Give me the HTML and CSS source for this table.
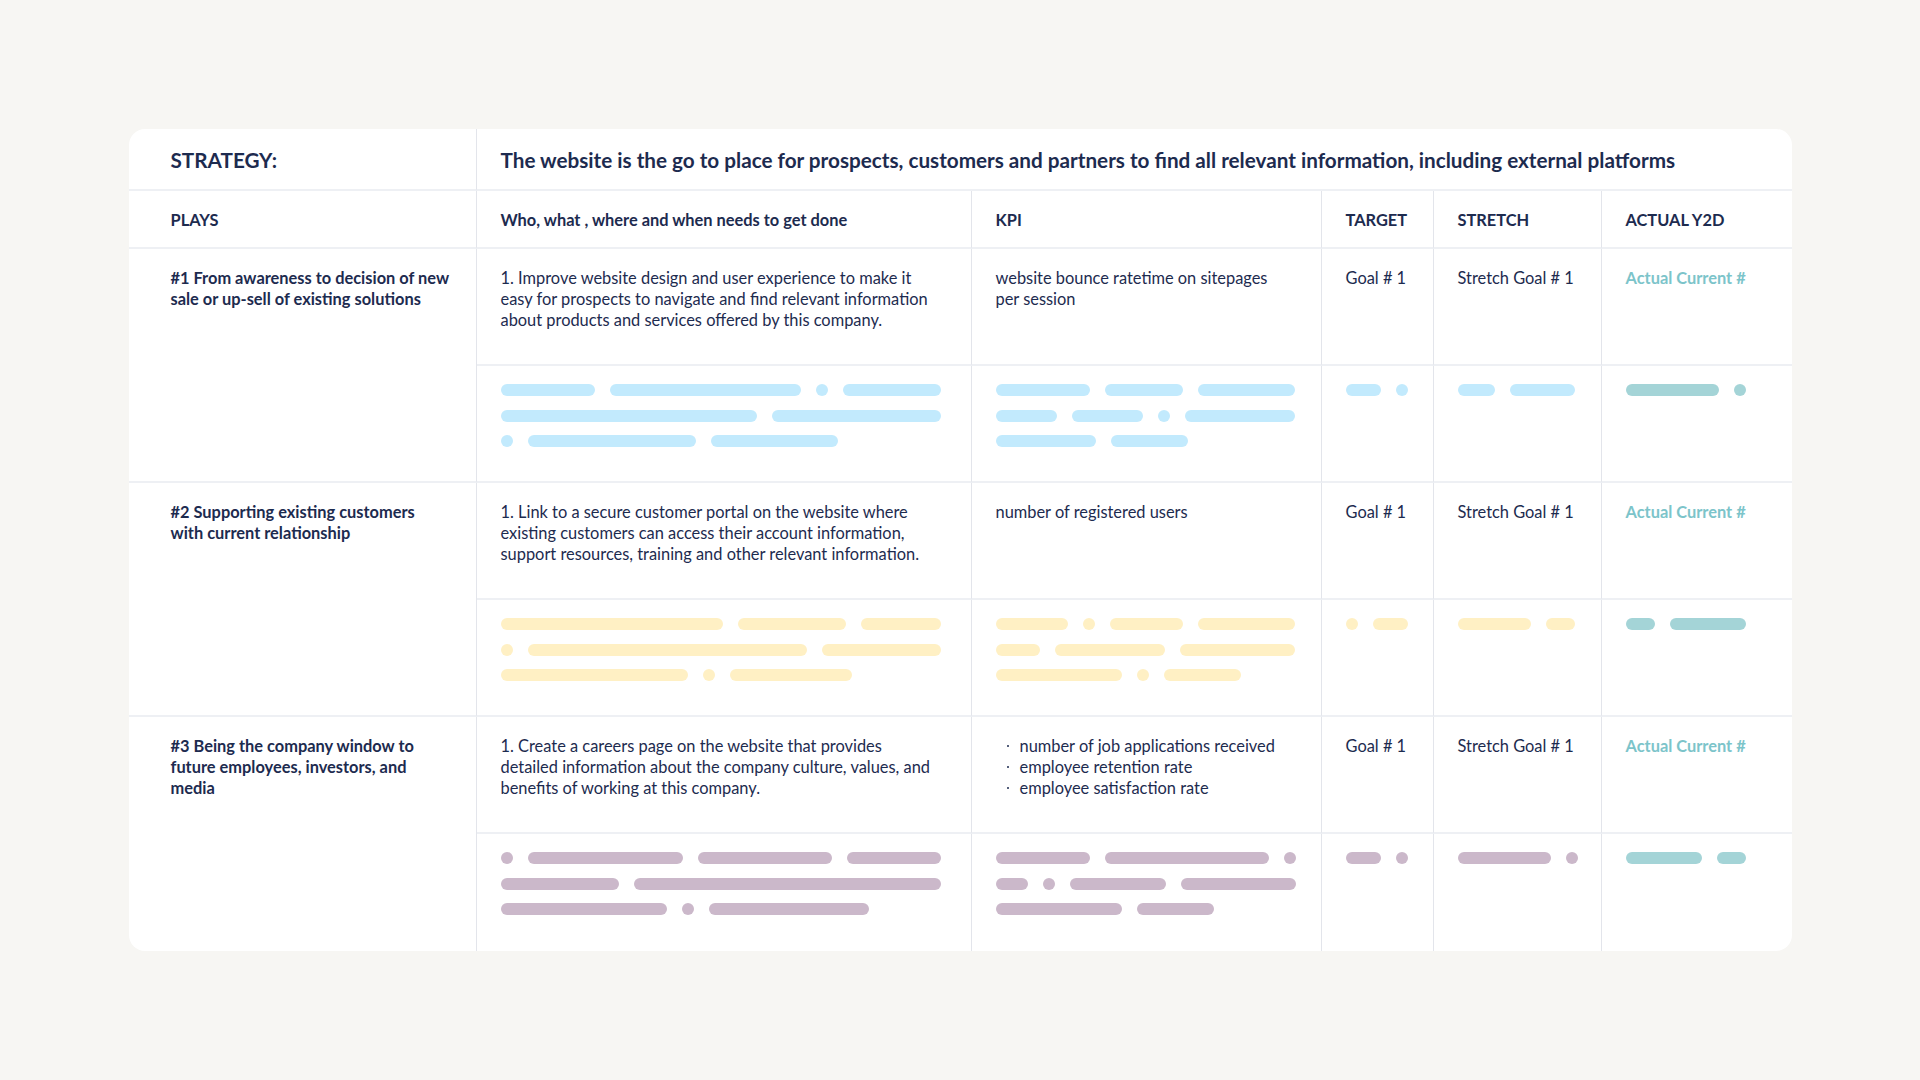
FILE: index.html
```html
<!DOCTYPE html>
<html lang="en">
<head>
<meta charset="utf-8">
<title>Strategy plays</title>
<link rel="stylesheet" href="styles.css">
</head>
<body>
<div class="page">
  <div class="sheet">
    <div class="cell c1 strat strat-label">STRATEGY:</div>
    <div class="cell strat strat-text last-col">The website is the go to place for prospects, customers and partners to find all relevant information, including external platforms</div>

    <div class="cell c1 head">PLAYS</div>
    <div class="cell head">Who, what , where and when needs to get done</div>
    <div class="cell head">KPI</div>
    <div class="cell head">TARGET</div>
    <div class="cell head">STRETCH</div>
    <div class="cell head last-col">ACTUAL Y2D</div>

    <!-- Play 1 -->
    <div class="cell c1 play">#1 From awareness to decision of new<br>sale or up-sell of existing solutions</div>
    <div class="cell txt wide">1. Improve website design and user experience to make it easy for prospects to navigate and find relevant information about products and services offered by this company.</div>
    <div class="cell txt wide">website bounce ratetime on sitepages per session</div>
    <div class="cell txt short">Goal # 1</div>
    <div class="cell txt short">Stretch Goal # 1</div>
    <div class="cell txt short actual last-col">Actual Current #</div>

    <div class="cell ph blue">
      <div class="pl"><span class="p" style="width:94px"></span><span class="p" style="width:191px"></span><span class="p d"></span><span class="p" style="width:98px"></span></div>
      <div class="pl"><span class="p" style="width:256px"></span><span class="p" style="width:169px"></span></div>
      <div class="pl"><span class="p d"></span><span class="p" style="width:168px"></span><span class="p" style="width:127px"></span></div>
    </div>
    <div class="cell ph blue">
      <div class="pl"><span class="p" style="width:94px"></span><span class="p" style="width:78px"></span><span class="p" style="width:97px"></span></div>
      <div class="pl"><span class="p" style="width:61px"></span><span class="p" style="width:71px"></span><span class="p d"></span><span class="p" style="width:110px"></span></div>
      <div class="pl"><span class="p" style="width:100px"></span><span class="p" style="width:77px"></span></div>
    </div>
    <div class="cell ph blue">
      <div class="pl"><span class="p" style="width:35px"></span><span class="p d"></span></div>
    </div>
    <div class="cell ph blue">
      <div class="pl"><span class="p" style="width:37px"></span><span class="p" style="width:65px"></span></div>
    </div>
    <div class="cell ph teal last-col">
      <div class="pl"><span class="p" style="width:93px"></span><span class="p d"></span></div>
    </div>

    <!-- Play 2 -->
    <div class="cell c1 play">#2 Supporting existing customers<br>with current relationship</div>
    <div class="cell txt wide">1. Link to a secure customer portal on the website where existing customers can access their account information, support resources, training and other relevant information.</div>
    <div class="cell txt wide">number of registered users</div>
    <div class="cell txt short">Goal # 1</div>
    <div class="cell txt short">Stretch Goal # 1</div>
    <div class="cell txt short actual last-col">Actual Current #</div>

    <div class="cell ph yellow">
      <div class="pl"><span class="p" style="width:222px"></span><span class="p" style="width:108px"></span><span class="p" style="width:80px"></span></div>
      <div class="pl"><span class="p d"></span><span class="p" style="width:279px"></span><span class="p" style="width:119px"></span></div>
      <div class="pl"><span class="p" style="width:187px"></span><span class="p d"></span><span class="p" style="width:122px"></span></div>
    </div>
    <div class="cell ph yellow">
      <div class="pl"><span class="p" style="width:72px"></span><span class="p d"></span><span class="p" style="width:73px"></span><span class="p" style="width:97px"></span></div>
      <div class="pl"><span class="p" style="width:44px"></span><span class="p" style="width:110px"></span><span class="p" style="width:115px"></span></div>
      <div class="pl"><span class="p" style="width:126px"></span><span class="p d"></span><span class="p" style="width:77px"></span></div>
    </div>
    <div class="cell ph yellow">
      <div class="pl"><span class="p d"></span><span class="p" style="width:35px"></span></div>
    </div>
    <div class="cell ph yellow">
      <div class="pl"><span class="p" style="width:73px"></span><span class="p" style="width:29px"></span></div>
    </div>
    <div class="cell ph teal last-col">
      <div class="pl"><span class="p" style="width:29px"></span><span class="p" style="width:76px"></span></div>
    </div>

    <!-- Play 3 -->
    <div class="cell c1 play last-row">#3 Being the company window to<br>future employees, investors, and<br>media</div>
    <div class="cell txt wide">1. Create a careers page on the website that provides detailed information about the company culture, values, and benefits of working at this company.</div>
    <div class="cell txt wide">
      <ul class="bullets">
        <li>number of job applications received</li>
        <li>employee retention rate</li>
        <li>employee satisfaction rate</li>
      </ul>
    </div>
    <div class="cell txt short">Goal # 1</div>
    <div class="cell txt short">Stretch Goal # 1</div>
    <div class="cell txt short actual last-col">Actual Current #</div>

    <div class="cell ph purple last-row">
      <div class="pl"><span class="p d"></span><span class="p" style="width:155px"></span><span class="p" style="width:134px"></span><span class="p" style="width:94px"></span></div>
      <div class="pl"><span class="p" style="width:118px"></span><span class="p" style="width:307px"></span></div>
      <div class="pl"><span class="p" style="width:166px"></span><span class="p d"></span><span class="p" style="width:160px"></span></div>
    </div>
    <div class="cell ph purple last-row">
      <div class="pl"><span class="p" style="width:94px"></span><span class="p" style="width:164px"></span><span class="p d"></span></div>
      <div class="pl"><span class="p" style="width:32px"></span><span class="p d"></span><span class="p" style="width:96px"></span><span class="p" style="width:115px"></span></div>
      <div class="pl"><span class="p" style="width:126px"></span><span class="p" style="width:77px"></span></div>
    </div>
    <div class="cell ph purple last-row">
      <div class="pl"><span class="p" style="width:35px"></span><span class="p d"></span></div>
    </div>
    <div class="cell ph purple last-row">
      <div class="pl"><span class="p" style="width:93px"></span><span class="p d"></span></div>
    </div>
    <div class="cell ph teal last-col last-row">
      <div class="pl"><span class="p" style="width:76px"></span><span class="p" style="width:29px"></span></div>
    </div>
  </div>
</div>
</body>
</html>
```

FILE: styles.css
```css
html, body {
  margin: 0;
  padding: 0;
}

body {
  background: #f7f6f3;
  font-family: Lato, "Noto Sans", "Liberation Sans", sans-serif;
  color: #1d2b4f;
}

.page {
  height: 1080px;
  display: flex;
  align-items: center;
  justify-content: center;
}

.sheet {
  width: 1663px;
  display: grid;
  grid-template-columns: 348px 495px 350px 112px 168px 190px;
  grid-template-rows: 62px 58px repeat(6, 117px);
  background: #ffffff;
  border-radius: 16px;
  overflow: hidden;
}

.cell {
  box-sizing: border-box;
  border-right: 1px solid #e3e5eb;
  border-bottom: 2px solid #eef0f4;
  padding: 18px 24px 0 24px;
  font-size: 16.4px;
  line-height: 21px;
}

.c1 {
  padding-left: 42px;
  padding-right: 12px;
}

.last-col {
  border-right: none;
}

.last-row {
  border-bottom: none;
}

.strat {
  padding-top: 2px;
  display: flex;
  align-items: center;
  font-size: 20.7px;
  font-weight: 700;
}

.strat-text {
  grid-column: span 5;
}

.head {
  padding-top: 0;
  display: flex;
  align-items: center;
  font-size: 16.4px;
  font-weight: 700;
}

.play {
  grid-row: span 2;
  font-weight: 700;
  white-space: nowrap;
}

.txt {
  font-weight: 400;
}

.wide {
  padding-right: 32px;
}

.short {
  padding-right: 4px;
  white-space: nowrap;
}

.actual {
  color: #7cc4ca;
  font-weight: 700;
}

.bullets {
  list-style: none;
  margin: 0;
  padding: 0 0 0 24px;
}

.bullets li {
  position: relative;
}

.bullets li::before {
  content: "";
  position: absolute;
  left: -13px;
  top: 9.5px;
  width: 2.5px;
  height: 2.5px;
  border-radius: 50%;
  background: #1d2b4f;
}

.ph {
  padding-top: 18px;
  display: flex;
  flex-direction: column;
  gap: 13.5px;
}

.pl {
  display: flex;
  gap: 15px;
}

.p {
  display: block;
  height: 12px;
  border-radius: 6px;
  flex: none;
}

.p.d {
  width: 12px;
}

.blue .p { background: #c2eafd; }
.yellow .p { background: #fff0c4; }
.purple .p { background: #cbb8ca; }
.teal .p { background: #a4d4d7; }
```
